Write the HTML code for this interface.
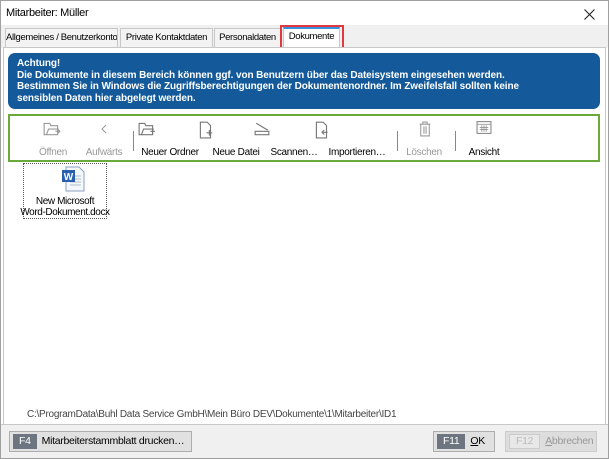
<!DOCTYPE html>
<html><head><meta charset="utf-8"><style>
*{box-sizing:border-box;margin:0;padding:0}
body{width:609px;height:459px;overflow:hidden;background:#fff;font-family:"Liberation Sans",sans-serif;font-size:11px;color:#000;position:relative}
.abs{position:absolute}
.win{left:0;top:0;width:609px;height:459px;border:1px solid #a0a0a0}
.tab{position:absolute;top:28px;height:19px;border:1px solid #c8c8c8;border-bottom:none;background:#f3f3f3;font-size:9.5px;text-align:center;line-height:17px;letter-spacing:-0.35px;white-space:nowrap;overflow:hidden}
.tb{position:absolute;top:147px;font-size:10px;text-align:center;letter-spacing:-0.3px;transform:translateX(-50%);white-space:nowrap}
.ic{position:absolute;top:121px;transform:translateX(-50%)}
.sep{position:absolute;top:131px;width:1px;height:20px;background:#888}
.btn{position:absolute;top:431px;height:21px;border:1px solid #adadad;background:#e1e1e1;font-size:10.5px;line-height:19px;letter-spacing:-0.3px;white-space:nowrap}
.key{display:inline-block;background:#6d7580;color:#fff;padding:0 6px;margin:2px 5px 0 3px;line-height:15px;height:15px;vertical-align:top}
</style></head><body>
<div class="abs win"></div>
<div class="abs" style="left:6px;top:7px;font-size:11px;letter-spacing:-0.3px">Mitarbeiter: Müller</div>
<svg class="abs" style="left:584px;top:9px" width="11" height="11" viewBox="0 0 11 11"><path d="M0.5 0.5l10 10M10.5 0.5l-10 10" stroke="#222" stroke-width="1.1"/></svg>
<div class="abs" style="left:1px;top:25px;width:607px;height:23px;background:#f0f0f0"></div>
<div class="tab" style="left:5px;width:113px">Allgemeines / Benutzerkonto</div>
<div class="tab" style="left:120px;width:93px">Private Kontaktdaten</div>
<div class="tab" style="left:214px;width:67px">Personaldaten</div>
<div class="tab" style="left:283px;top:27px;height:21px;width:57px;background:#fff;border-top:2px solid #3c8fdc;line-height:16px">Dokumente</div>
<div class="abs" style="left:280px;top:25px;width:64px;height:25px;border:2px solid #e0393e"></div>
<div class="abs" style="left:3px;top:47px;width:603px;height:377px;background:#fff;border:1px solid #c8c8c8;border-bottom:none"></div>
<div class="abs" style="left:8px;top:53px;width:592px;height:56px;background:#145a9a;border-radius:7px;color:#fff;font-weight:bold;font-size:10px;line-height:11.5px;padding:5px 0 0 9px;letter-spacing:-0.1px">Achtung!<br>Die Dokumente in diesem Bereich können ggf. von Benutzern über das Dateisystem eingesehen werden.<br>Bestimmen Sie in Windows die Zugriffsberechtigungen der Dokumentenordner. Im Zweifelsfall sollten keine<br>sensiblen Daten hier abgelegt werden.</div>
<div class="abs" style="left:8px;top:114px;width:592px;height:48px;border:2px solid #6aaa3a"></div>
<svg class="ic" style="left:52px" width="18" height="16" viewBox="0 0 16 14" fill="none" stroke="#999" stroke-width="1"><path d="M1 2h5l1 2h6v8H1z M3 12l2-5h9"/><path d="M11 9h4m-2-2l2 2-2 2"/></svg>
<svg class="ic" style="left:104px" width="8" height="16" viewBox="0 0 8 16" fill="none" stroke="#999" stroke-width="1"><path d="M6 4l-4 4 4 4"/></svg>
<svg class="ic" style="left:147px" width="18" height="16" viewBox="0 0 16 14" fill="none" stroke="#777" stroke-width="1"><path d="M1 2h5l1 2h6v8H1z M3 12l2-5h9"/><path d="M13 7v4m-2-2h4"/></svg>
<svg class="ic" style="left:206px" width="16" height="18" viewBox="0 0 14 16" fill="none" stroke="#777" stroke-width="1"><path d="M2 1h6l3 3v11H2z"/><path d="M10 8v5m-2.5-2.5h5"/></svg>
<svg class="ic" style="left:262px" width="16" height="16" viewBox="0 0 14 14" fill="none" stroke="#777" stroke-width="1"><path d="M2 2l10 6 M1 9h12v3H1z"/></svg>
<svg class="ic" style="left:322px" width="16" height="18" viewBox="0 0 14 16" fill="none" stroke="#777" stroke-width="1"><path d="M2 1h6l3 3v11H2z"/><path d="M12 10H7m2-2l-2 2 2 2"/></svg>
<svg class="ic" style="left:425px" width="13" height="16" viewBox="0 0 12 15" fill="none" stroke="#999" stroke-width="1"><path d="M1 3h10M4 3V1h4v2M2 3v11h8V3M5 5v7M7 5v7"/></svg>
<svg class="ic" style="left:484px" width="15" height="13" viewBox="0 0 14 12" fill="none" stroke="#888" stroke-width="1"><rect x="0.5" y="0.5" width="13" height="11"/><path d="M1 3h12M3 6h8M3 8h8M5 4v6M7 4v6M9 4v6" stroke-width=".7"/></svg>
<div class="sep" style="left:133px"></div><div class="sep" style="left:397px"></div><div class="sep" style="left:455px"></div>
<div class="tb" style="left:53px;color:#999">Öffnen</div>
<div class="tb" style="left:104px;color:#999">Aufwärts</div>
<div class="tb" style="left:170px">Neuer Ordner</div>
<div class="tb" style="left:236px">Neue Datei</div>
<div class="tb" style="left:294px">Scannen…</div>
<div class="tb" style="left:357px">Importieren…</div>
<div class="tb" style="left:424px;color:#999">Löschen</div>
<div class="tb" style="left:484px">Ansicht</div>
<div class="abs" style="left:23px;top:163px;width:84px;height:56px;border:1px dotted #555"></div>
<svg class="abs" style="left:61px;top:166px" width="25" height="26" viewBox="0 0 25 26"><path d="M5 1h13l5 5v19H5z" fill="#f4f7fb" stroke="#8aa0c0"/><path d="M9 10h11M9 13h11M9 16h11M9 19h11" stroke="#9ab" stroke-width=".8"/><rect x="1" y="4" width="13" height="12" fill="#2a5fb0"/><text x="7.5" y="14" fill="#fff" font-size="10" font-weight="bold" text-anchor="middle" font-family="Liberation Sans">W</text></svg>
<div class="abs" style="left:18px;top:196px;width:94px;text-align:center;font-size:10px;line-height:11px;letter-spacing:-0.4px;white-space:nowrap">New Microsoft<br>Word-Dokument.docx</div>
<div class="abs" style="left:27px;top:409px;font-size:10px;color:#444;letter-spacing:-0.25px;white-space:nowrap">C:\ProgramData\Buhl Data Service GmbH\Mein Büro DEV\Dokumente\1\Mitarbeiter\ID1</div>
<div class="abs" style="left:1px;top:424px;width:607px;height:34px;background:#f0f0f0;border-top:1px solid #c8c8c8"></div>
<div class="btn" style="left:9px;width:183px"><span class="key">F4</span>Mitarbeiterstammblatt drucken…</div>
<div class="btn" style="left:433px;width:62px"><span class="key">F11</span><u>O</u>K</div>
<div class="btn" style="left:505px;width:92px;color:#999;background:#ddd;border-color:#ccc"><span class="key" style="background:#e8e8e8;color:#bbb;border:1px solid #ccc;line-height:13px">F12</span><u>A</u>bbrechen</div>
</body></html>
